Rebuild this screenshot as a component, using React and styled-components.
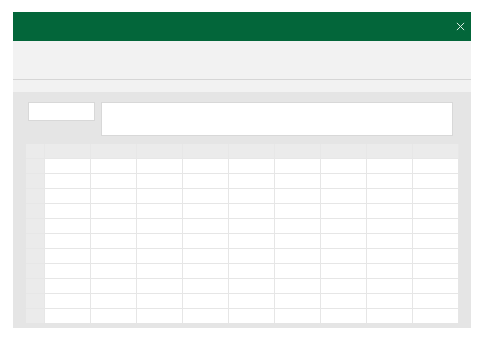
import React from 'react';
import styled, { createGlobalStyle } from 'styled-components';

const GlobalStyle = createGlobalStyle`
  body {
    margin: 0;
    background: #ffffff;
    font-family: "Segoe UI", "Open Sans", "Liberation Sans", sans-serif;
  }
`;

const COLS = 9;
const ROWS = 11;

const Window = styled.div`
  width: 458px;
  margin: 12px 0 0 13px;
  display: flex;
  flex-direction: column;
`;

const TitleBar = styled.div`
  height: 29px;
  background: #03663a;
  display: flex;
  align-items: center;
  justify-content: flex-end;
  padding-right: 3px;
`;

const CloseButton = styled.button`
  width: 16px;
  height: 16px;
  padding: 0;
  border: none;
  background: none;
  display: flex;
  align-items: center;
  justify-content: center;
  cursor: pointer;
  svg {
    width: 9px;
    height: 9px;
  }
`;

const Ribbon = styled.div`
  height: 38px;
  background: #f2f2f2;
  border-bottom: 1px solid #d6d6d6;
`;

const RibbonFooter = styled.div`
  height: 12px;
  background: #f2f2f2;
`;

const Workspace = styled.div`
  background: #e5e5e5;
  padding: 10px 12px 5px 13px;
  display: flex;
  flex-direction: column;
`;

const FormulaRow = styled.div`
  display: flex;
  gap: 6px;
  padding: 0 6px 0 2px;
  align-items: flex-start;
`;

const NameBox = styled.div`
  width: 65px;
  height: 17px;
  background: #ffffff;
  border: 1px solid #d8d8d8;
`;

const FormulaBox = styled.div`
  flex: 1;
  height: 32px;
  background: #ffffff;
  border: 1px solid #d8d8d8;
`;

const Sheet = styled.div`
  margin-top: 8px;
  height: 179px;
  overflow: hidden;
  display: grid;
  grid-template-columns: 19px repeat(${COLS}, 46px);
  grid-auto-rows: 15px;
  background: #ebebeb;
`;

const Cell = styled.div`
  box-sizing: border-box;
  background: ${(p) => (p.$header ? '#ebebeb' : '#ffffff')};
  border-right: 1px solid ${(p) => (p.$header ? '#e7e7e7' : '#e6e6e6')};
  border-bottom: 1px solid ${(p) => (p.$header ? '#e7e7e7' : '#e6e6e6')};
`;

const CloseIcon = () => (
  <svg viewBox="0 0 10 10" aria-hidden="true">
    <path d="M1 1 L9 9 M9 1 L1 9" stroke="#dfeee5" strokeWidth="1.1" fill="none" />
  </svg>
);

export default function App() {
  const cells = [];
  for (let r = 0; r <= ROWS; r++) {
    for (let c = 0; c <= COLS; c++) {
      cells.push(<Cell key={`${r}-${c}`} $header={r === 0 || c === 0} />);
    }
  }
  return (
    <>
      <GlobalStyle />
      <Window>
        <TitleBar>
          <CloseButton aria-label="Close">
            <CloseIcon />
          </CloseButton>
        </TitleBar>
        <Ribbon />
        <RibbonFooter />
        <Workspace>
          <FormulaRow>
            <NameBox />
            <FormulaBox />
          </FormulaRow>
          <Sheet>{cells}</Sheet>
        </Workspace>
      </Window>
    </>
  );
}
